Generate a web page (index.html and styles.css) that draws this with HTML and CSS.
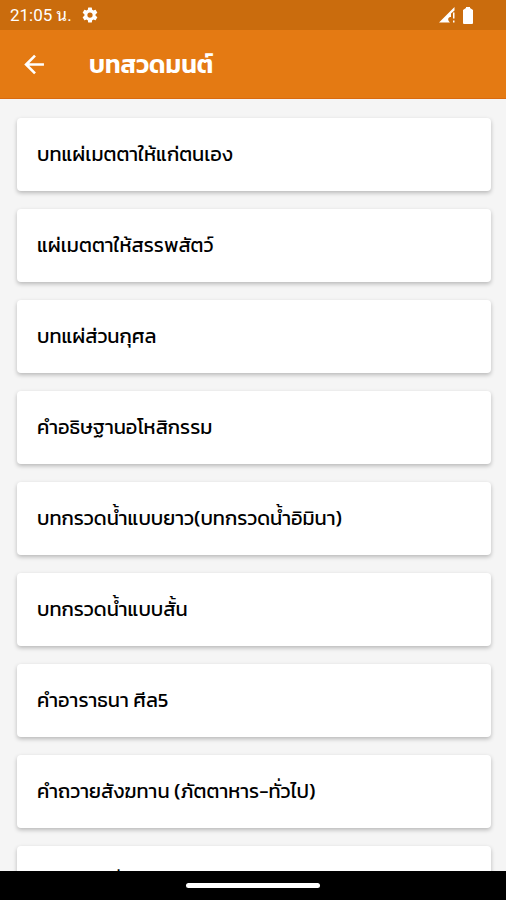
FILE: index.html
```html
<!DOCTYPE html>
<html lang="th">
<head>
<meta charset="utf-8">
<meta name="viewport" content="width=device-width, initial-scale=1">
<title>บทสวดมนต์</title>
<link rel="stylesheet" href="styles.css">
</head>
<body>
<div class="status">
  <span class="clock">21:05 น.</span>
  <svg class="gear" viewBox="0 0 24 24" aria-hidden="true"><path d="M19.4 13a7.500 7.500 0 0 0 0-2l2.100-1.650a.5.5 0 0 0 .12-.64l-2-3.460a.5.5 0 0 0-.61-.22l-2.490 1a7.300 7.300 0 0 0-1.690-.98l-.38-2.650A.49.49 0 0 0 14 2h-4a.49.49 0 0 0-.49.42l-.38 2.650c-.61.25-1.170.58-1.690.98l-2.490-1a.5.5 0 0 0-.61.22l-2 3.460a.5.5 0 0 0 .12.64L4.570 11a7.500 7.500 0 0 0 0 2l-2.110 1.650a.5.5 0 0 0-.12.64l2 3.460c.12.22.39.3.61.22l2.490-1c.52.4 1.080.73 1.690.98l.38 2.650c.03.24.24.4.49.4h4c.25 0 .46-.16.49-.4l.38-2.650a7.700 7.700 0 0 0 1.690-.98l2.490 1c.23.09.49 0 .61-.22l2-3.460a.5.5 0 0 0-.12-.64zM12 15.500a3.500 3.500 0 1 1 0-7 3.500 3.500 0 0 1 0 7z"/></svg>
  <span class="tray">
    <svg class="signal" viewBox="0 0 16 16" aria-hidden="true"><path d="M0 15.500 15.500 0v3.500L12 6.500V10c-3 0-4 2.500-1 5.500zM14 5.500h1.500v6H14zM14 13.500h1.500v2H14z"/></svg>
    <svg class="battery" viewBox="0 0 10 17" aria-hidden="true"><path d="M3 0h4v1l3 2v13q0 1-1 1H1q-1 0-1-1V3l3-2z"/></svg>
  </span>
</div>
<header class="bar">
  <button class="back" type="button" aria-label="กลับ"><svg viewBox="0 0 20 20" aria-hidden="true"><path d="M19 10H2M10.500 1.500 2 10l8.500 8.500"/></svg></button>
  <h1 class="title">บทสวดมนต์</h1>
</header>
<main class="list">
  <a class="card" href="#1">บทแผ่เมตตาให้แก่ตนเอง</a>
  <a class="card" href="#2">แผ่เมตตาให้สรรพสัตว์</a>
  <a class="card" href="#3">บทแผ่ส่วนกุศล</a>
  <a class="card" href="#4">คำอธิษฐานอโหสิกรรม</a>
  <a class="card" href="#5">บทกรวดน้ำแบบยาว(บทกรวดน้ำอิมินา)</a>
  <a class="card" href="#6">บทกรวดน้ำแบบสั้น</a>
  <a class="card" href="#7">คำอาราธนา ศีล5</a>
  <a class="card" href="#8">คำถวายสังฆทาน (ภัตตาหาร-ทั่วไป)</a>
  <a class="card" href="#9">คำถวายเพื่อ</a>
</main>
<footer class="nav"><span class="pill"></span></footer>
</body>
</html>
```
FILE: styles.css
```css
* { box-sizing: border-box; }
body {
  margin: 0;
  height: 100vh;
  display: flex;
  flex-direction: column;
  background: #f5f5f5;
  color: #000;
  font-family: Kanit, Prompt, "Noto Sans Thai", Roboto, "Noto Sans", sans-serif;
}
.status {
  flex: none;
  display: flex;
  align-items: center;
  height: 30px;
  padding: 0 33px 0 10px;
  background: #ca6c0d;
  color: #fff;
}
.clock {
  font-family: Roboto, "Noto Sans Thai Looped", Loma, Garuda, Waree, sans-serif;
  font-size: 17px;
  line-height: 30px;
}
svg { display: block; fill: #fff; }
.gear { width: 18px; height: 18px; margin-left: 9px; }
.tray { display: flex; gap: 8px; margin-left: auto; }
.signal { width: 16px; height: 16px; }
.battery { width: 10px; height: 17px; }
.bar {
  flex: none;
  display: flex;
  align-items: center;
  gap: 44px;
  height: 69px;
  padding: 0 24px;
  background: #e47a13;
  border-bottom: 1px solid #d96a10;
  color: #fff;
}
.back { padding: 0; border: 0; background: none; }
.back svg {
  width: 21px;
  height: 21px;
  fill: none;
  stroke: #fff;
  stroke-width: 2.5;
}
.title { margin: 0; font-size: 25px; line-height: 36px; font-weight: 600; }
.list {
  flex: 1;
  min-height: 0;
  overflow: hidden;
  display: flex;
  flex-direction: column;
  gap: 18px;
  padding: 19px 15px 0 17px;
}
.card {
  flex: none;
  padding: 22px 20px;
  border-radius: 4px;
  background: #fff;
  box-shadow: 0 2px 4px rgba(0, 0, 0, .25);
  color: inherit;
  font-size: 20px;
  line-height: 29px;
  font-weight: 400;
  text-decoration: none;
}
.nav {
  flex: none;
  display: flex;
  justify-content: center;
  align-items: center;
  height: 29px;
  background: #000;
}
.pill { width: 134px; height: 5px; border-radius: 3px; background: #fff; }
```
